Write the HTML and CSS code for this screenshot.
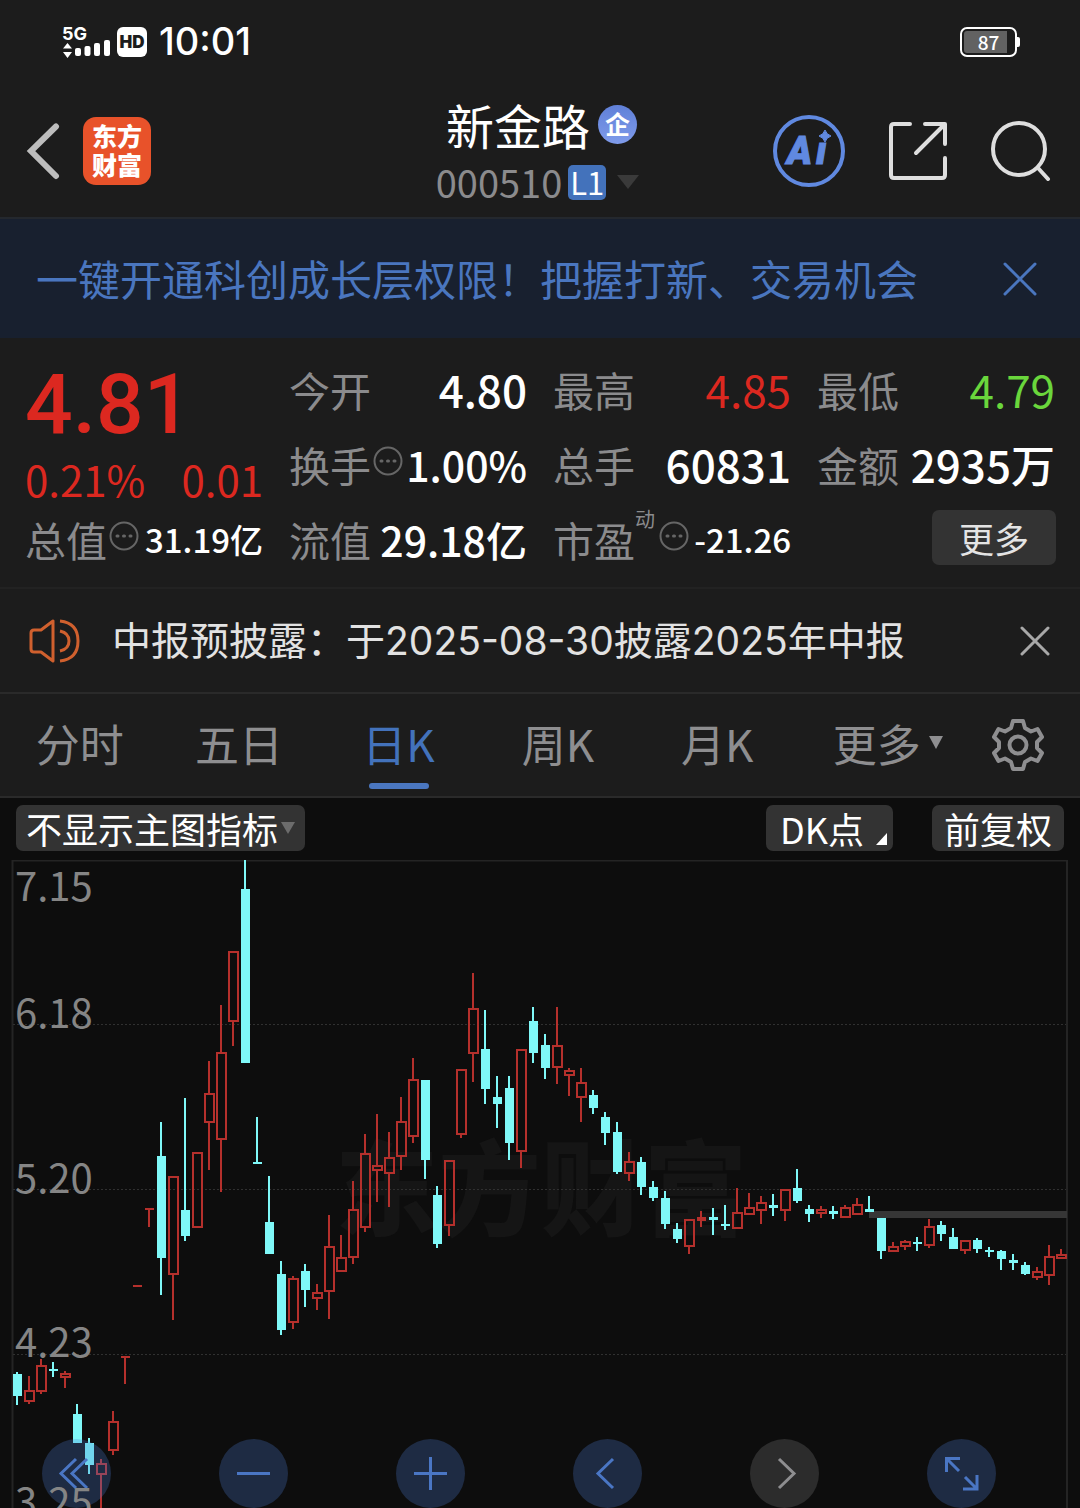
FILE: index.html
```html
<!DOCTYPE html>
<html lang="zh-CN">
<head>
<meta charset="utf-8">
<meta name="viewport" content="width=device-width, initial-scale=1">
<title>新金路 000510</title>
<link rel="stylesheet" href="styles.css">
</head>
<body>
<div class="status">
  <svg class="signal" width="48" height="36" viewBox="0 0 48 36" aria-hidden="true">
    <text x="0" y="16" class="signal-label">5G</text>
    <path d="M1 24.500L5.500 19L10 24.500ZM1 28L5.500 34L10 28Z" fill="#fff"/>
    <rect x="13" y="24" width="6" height="8" rx="2" fill="#fff"/>
    <rect x="22.500" y="22" width="6" height="10" rx="2" fill="#fff"/>
    <rect x="32" y="19" width="6" height="13" rx="2" fill="#fff"/>
    <rect x="42" y="16" width="6" height="16" rx="2" fill="#fff"/>
  </svg>
  <span class="hd">HD</span>
  <time class="clock">10:01</time>
  <span class="battery"><span class="battery-fill"></span><span class="battery-text">87</span></span>
</div>

<header class="nav">
  <div class="nav-left">
    <button class="icon-btn" aria-label="返回">
      <svg width="36" height="60" viewBox="0 0 36 60"><path d="M32 5.500L7 30L32 55" fill="none" stroke="#bdbdbd" stroke-width="6" stroke-linecap="round"/></svg>
    </button>
    <a class="logo" href="#">东方<br>财富</a>
  </div>
  <div class="nav-title">
    <h1 class="name">新金路<span class="corp">企</span></h1>
    <button class="code">000510<span class="level">L1</span>
      <svg width="22" height="14" viewBox="0 0 22 14" aria-hidden="true"><path d="M0 0H22L11 14Z" fill="#3a3a3a"/></svg>
    </button>
  </div>
  <div class="nav-right">
    <button class="icon-btn" aria-label="Ai">
      <svg width="72" height="72" viewBox="0 0 72 72">
        <circle cx="36" cy="36" r="34" fill="none" stroke="#6089e0" stroke-width="4"/>
        <text x="14" y="49" class="ai">A</text><text x="43" y="49" class="ai">ı</text>
        <path d="M52 15Q53.500 19.500 58 21Q53.500 22.500 52 27Q50.500 22.500 46 21Q50.500 19.500 52 15Z" fill="#6089e0" stroke="#6089e0"/>
      </svg>
    </button>
    <button class="icon-btn" aria-label="分享">
      <svg width="60" height="60" viewBox="0 0 60 60" fill="none" stroke="#dedede" stroke-width="4" stroke-linecap="round" stroke-linejoin="round"><path d="M22 3H6Q3 3 3 6V54Q3 57 6 57H54Q57 57 57 54V37M37 3H57V23M55 5L28 32"/></svg>
    </button>
    <button class="icon-btn" aria-label="搜索">
      <svg width="60" height="60" viewBox="0 0 60 60" fill="none" stroke="#dedede" stroke-width="4" stroke-linecap="round"><circle cx="28" cy="28" r="26"/><path d="M47 47L57 58"/></svg>
    </button>
  </div>
</header>

<div class="banner">
  <a class="banner-text" href="#">一键开通科创成长层权限！把握打新、交易机会</a>
  <button class="icon-btn" aria-label="关闭">
    <svg width="34" height="34" viewBox="0 0 34 34"><path d="M2 2L32 32M32 2L2 32" stroke="#4a76bf" stroke-width="3" stroke-linecap="round"/></svg>
  </button>
</div>

<section class="quote">
  <div class="price-box">
    <strong class="price">4.81</strong>
    <div class="change"><span>0.21%</span><span>0.01</span></div>
  </div>
  <div class="cell"><span class="label">今开</span><span class="value">4.80</span></div>
  <div class="cell"><span class="label">最高</span><span class="value up">4.85</span></div>
  <div class="cell"><span class="label">最低</span><span class="value down">4.79</span></div>
  <div class="cell"><span class="label">换手</span><svg class="dots" viewBox="0 0 30 30"><circle cx="15" cy="15" r="13.500"/><path d="M8 15h1M14.500 15h1M21 15h1"/></svg><span class="value mid">1.00%</span></div>
  <div class="cell"><span class="label">总手</span><span class="value">60831</span></div>
  <div class="cell"><span class="label">金额</span><span class="value">2935万</span></div>
  <div class="cell"><span class="label">总值</span><svg class="dots" viewBox="0 0 30 30"><circle cx="15" cy="15" r="13.500"/><path d="M8 15h1M14.500 15h1M21 15h1"/></svg><span class="value small">31.19亿</span></div>
  <div class="cell"><span class="label">流值</span><span class="value mid">29.18亿</span></div>
  <div class="cell"><span class="label">市盈</span><span class="mark">动</span><svg class="dots" viewBox="0 0 30 30"><circle cx="15" cy="15" r="13.500"/><path d="M8 15h1M14.500 15h1M21 15h1"/></svg><span class="value small">-21.26</span></div>
  <div class="cell"><button class="more">更多</button></div>
</section>

<div class="notice">
  <svg width="52" height="46" viewBox="0 0 52 46" fill="none" stroke="#d0602e" stroke-width="3" stroke-linejoin="round" aria-hidden="true">
    <path d="M24 3V43L12 34H5Q2 34 2 31V15Q2 12 5 12H12ZM31 3Q49 5 49 23Q49 41 31 43M31 13Q40 15 40 23Q40 31 31 33"/>
  </svg>
  <a class="notice-text" href="#">中报预披露：于2025-08-30披露2025年中报</a>
  <button class="icon-btn" aria-label="关闭">
    <svg width="30" height="30" viewBox="0 0 30 30"><path d="M2 2L28 28M28 2L2 28" stroke="#a8a8a8" stroke-width="3" stroke-linecap="round"/></svg>
  </button>
</div>

<nav class="tabs">
  <button class="tab">分时</button>
  <button class="tab">五日</button>
  <button class="tab active">日K</button>
  <button class="tab">周K</button>
  <button class="tab">月K</button>
  <button class="tab tab-more">更多<svg width="14" height="13" viewBox="0 0 14 13" aria-hidden="true"><path d="M0 0H14L7 13Z" fill="#8e8e90"/></svg></button>
  <button class="tab tab-set" aria-label="设置">
    <svg width="52" height="54" viewBox="0 0 52 54" fill="none" stroke="#8e8e90" stroke-width="4" stroke-linejoin="round"><path d="M21 3H31L33 10L39 13.500L45.500 11L50 19L45 24V30L50 35L45.500 43L39 40.500L33 44L31 51H21L19 44L13 40.500L6.500 43L2 35L7 30V24L2 19L6.500 11L13 13.500L19 10Z"/><circle cx="26" cy="27" r="8.500"/></svg>
  </button>
</nav>

<main class="chart">
  <div class="tools">
    <button class="chip">不显示主图指标<svg width="14" height="12" viewBox="0 0 14 12" aria-hidden="true"><path d="M0 0H14L7 12Z" fill="#6c6c6c"/></svg></button>
    <button class="chip chip-dk">DK点<svg class="corner" width="11" height="12" viewBox="0 0 11 12" aria-hidden="true"><path d="M11 0V12H0Z" fill="#fff"/></svg></button>
    <button class="chip chip-adjust">前复权</button>
  </div>
  <div class="plot">
    <svg class="canvas" viewBox="0 860 1080 648" role="img" aria-label="日K线图">
      <text x="335" y="1228" class="watermark">东方财富</text>
      <path class="frame" d="M12.500 1508V860.500H1067V1508"/>
      <path class="grid" d="M13 1024.500H1066M13 1189.500H1066M13 1354.500H1066"/>
      <rect x="869" y="1211" width="198" height="7" fill="#363636"/>
      <g id="candles"></g>
    </svg>
    <div class="controls">
      <button class="round" aria-label="最左"><svg viewBox="0 0 69 69"><path d="M34 20L19 34.500L34 49M45 20L30 34.500L45 49"/></svg></button>
      <button class="round" aria-label="缩小"><svg viewBox="0 0 69 69"><path d="M18 34.500H51"/></svg></button>
      <button class="round" aria-label="放大"><svg viewBox="0 0 69 69"><path d="M18 34.500H51M34.500 18V51"/></svg></button>
      <button class="round" aria-label="左移"><svg viewBox="0 0 69 69"><path d="M40 20L25 34.500L40 49"/></svg></button>
      <button class="round off" aria-label="右移"><svg viewBox="0 0 69 69"><path d="M29 20L44 34.500L29 49"/></svg></button>
      <button class="round" aria-label="全屏"><svg viewBox="0 0 69 69"><path d="M33 19.500H19.500V33M20 20L32 32M36 50H50V36M49 49L38 38"/></svg></button>
    </div>
    <svg class="axis" viewBox="0 860 1080 648">
      <text x="15" y="901">7.15</text>
      <text x="15" y="1028">6.18</text>
      <text x="15" y="1193">5.20</text>
      <text x="15" y="1357">4.23</text>
      <text x="15" y="1517">3.25</text>
    </svg>
  </div>
</main>
<script src="chart.js"></script>
</body>
</html>
```
FILE: styles.css
```css
* { box-sizing: border-box; }
body {
  margin: 0;
  background: #0d0d0d;
  color: #fff;
  font-family: "Noto Sans CJK SC", sans-serif;
  font-weight: 400;
  overflow-x: hidden;
}
button {
  margin: 0;
  padding: 0;
  border: 0;
  background: none;
  color: inherit;
  font: inherit;
}
a { color: inherit; text-decoration: none; }
svg { display: block; flex: none; }
.icon-btn { display: flex; }

.status {
  display: flex;
  align-items: center;
  height: 83px;
  padding: 0 60px 0 62px;
  background: #1c1c1c;
}
.signal { overflow: visible; }
.signal-label { font: 700 18px Inter, sans-serif; fill: #fff; }
.hd {
  width: 30px;
  height: 30px;
  margin-left: 7px;
  border-radius: 6px;
  background: #fff;
  color: #1c1c1c;
  font: 900 17px/30px Inter, sans-serif;
  text-align: center;
}
.clock { margin-left: 12px; font: 500 38px/83px Inter, sans-serif; }
.battery {
  position: relative;
  width: 57px;
  height: 30px;
  margin-left: auto;
  margin-right: 3px;
  padding: 2px;
  border: 2px solid #fff;
  border-radius: 7px;
}
.battery::after {
  content: "";
  position: absolute;
  right: -5px;
  top: 8px;
  width: 3px;
  height: 10px;
  border-radius: 0 2px 2px 0;
  background: #fff;
}
.battery-fill { display: block; width: 87%; height: 100%; border-radius: 3px 0 0 3px; background: #626262; }
.battery-text { position: absolute; inset: 0; font: 500 19px/26px "Noto Sans CJK SC", sans-serif; text-align: center; }

.nav {
  display: grid;
  grid-template-columns: 1fr auto 1fr;
  align-items: center;
  height: 136px;
  padding: 2px 29px 0 24px;
  border-bottom: 2px solid #24282e;
  background: #1c1c1c;
}
.nav-left { display: flex; align-items: center; gap: 23px; }
.logo {
  width: 68px;
  height: 68px;
  padding-top: 4px;
  border-radius: 13px;
  background: #e8522a;
  font-size: 25px;
  font-weight: 900;
  line-height: 29px;
  text-align: center;
}
.nav-title { display: flex; flex-direction: column; align-items: center; padding-top: 4px; }
.name { display: flex; align-items: center; gap: 8px; margin: 0; padding-left: 8px; font-size: 48px; font-weight: 400; line-height: 58px; }
.corp {
  width: 39px;
  height: 39px;
  border-radius: 50%;
  background: linear-gradient(#6080d8, #7f9bea);
  font-size: 25px;
  font-weight: 700;
  line-height: 37px;
  text-align: center;
}
.code { display: flex; align-items: center; color: #8b8b8d; font-size: 38px; line-height: 58px; }
.level {
  width: 38px;
  height: 35px;
  margin: 0 11px 0 6px;
  border-radius: 5px;
  background: #4372bb;
  color: #fff;
  font-size: 31px;
  line-height: 33px;
  text-align: center;
}
.nav-right { display: flex; align-items: center; justify-content: flex-end; gap: 43px; }
.ai { font: italic 900 38px Roboto, sans-serif; fill: #6089e0; stroke: #6089e0; }

.banner {
  display: flex;
  align-items: center;
  justify-content: space-between;
  height: 119px;
  padding: 0 43px 0 36px;
  background: #18202f;
  color: #4a76bf;
}
.banner-text { padding-bottom: 2px; font-size: 42px; line-height: 60px; white-space: nowrap; }

.quote {
  display: grid;
  grid-template-columns: repeat(4, 1fr);
  grid-auto-rows: 75px;
  column-gap: 26px;
  padding: 13px 25px 11px;
  border-bottom: 2px solid #222;
  background: #1c1c1c;
}
.price-box { grid-row: span 2; color: #dc2820; }
.price { display: block; font: 500 84px/108px Roboto, sans-serif; }
.change { display: flex; justify-content: space-between; font-size: 42px; line-height: 40px; }
.cell { display: flex; align-items: center; white-space: nowrap; line-height: 60px; }
.label { color: #8b8b8d; font-size: 41px; }
.value { margin-left: auto; font-size: 44px; font-weight: 500; }
.mid { font-size: 41px; }
.small { font-size: 33px; }
.up { color: #dc2820; font-weight: 400; }
.down { color: #6ad63c; font-weight: 400; }
.dots { width: 30px; height: 30px; margin: 0 0 6px 2px; fill: none; stroke: #666; stroke-width: 2; stroke-linecap: round; }
.dots path { stroke-width: 3; }
.mark { align-self: flex-start; padding-right: 2px; color: #8b8b8d; font-size: 20px; line-height: 36px; }
.more {
  width: 124px;
  height: 55px;
  margin: 0 -1px 2px auto;
  border-radius: 7px;
  background: #333;
  color: #e4e4e4;
  font-size: 35px;
  line-height: 52px;
}

.notice {
  display: flex;
  align-items: center;
  height: 105px;
  padding: 0 30px 0 29px;
  border-bottom: 2px solid #2a2a2a;
  background: #1c1c1c;
  color: #e2e2e2;
}
.notice-text { margin: 0 auto 0 31px; font-family: Inter, "Noto Sans CJK SC", sans-serif; font-size: 39px; line-height: 60px; white-space: nowrap; }

.tabs {
  display: grid;
  grid-template-columns: repeat(6, 4fr) 3fr;
  height: 104px;
  padding-right: 4px;
  border-bottom: 2px solid #2a2a2a;
  background: #1c1c1c;
}
.tab {
  position: relative;
  display: flex;
  align-items: center;
  justify-content: center;
  padding-bottom: 5px;
  color: #8e8e90;
  font-size: 44px;
}
.tab-more { gap: 8px; padding-left: 22px; }
.tab-set { padding: 0 0 0 4px; }
.active { color: #4372bb; }
.active::after {
  content: "";
  position: absolute;
  left: 50%;
  bottom: 7px;
  width: 60px;
  height: 6px;
  margin-left: -30px;
  border-radius: 3px;
  background: #4a76bf;
}

.tools { display: flex; align-items: center; height: 62px; padding: 0 16px 2px; }
.chip {
  display: flex;
  align-items: center;
  gap: 3px;
  height: 46px;
  padding: 0 10px;
  border-radius: 7px;
  background: #333;
  font-size: 36px;
  line-height: 43px;
}
.chip-dk { gap: 12px; margin-left: auto; padding: 0 6px 0 14px; }
.corner { align-self: flex-end; margin-bottom: 6px; }
.chip-adjust { margin-left: 39px; padding: 0 12px; }

.plot { position: relative; }
.canvas { width: 100%; height: auto; }
.watermark { font-size: 103px; font-weight: 900; fill: #151515; }
.frame { fill: none; stroke: #242424; stroke-width: 2; }
.grid { fill: none; stroke: #303030; stroke-dasharray: 2 2; }
.rise-line { fill: none; stroke: #b5302c; stroke-width: 2; }
.rise-wick { fill: #b5302c; }
.fall { fill: #7ff8f8; }
.controls {
  position: absolute;
  inset: auto 0 0;
  display: flex;
  justify-content: space-between;
  padding: 0 84px 0 42px;
}
.round { width: 69px; height: 69px; border-radius: 50%; background: rgb(74 122 208 / 28%); color: #4a76c4; }
.round svg { fill: none; stroke: currentColor; stroke-width: 3; }
.off { background: #2c2c2c; color: #8e8e90; }
.axis { position: absolute; inset: 0; width: 100%; height: 100%; overflow: visible; pointer-events: none; fill: #858585; font-size: 40px; }
```
FILE: chart.js
```js
// One entry per day: direction (r = rise, f = fall), high, body top, body bottom, low.
const days = `f 1372 1374 1396 1405|r 1376 1390 1402 1404|r 1359 1365 1392 1394|f 1362 1369 1371 1377
r 1371 1373 1378 1388|f 1404 1414 1443 1443|f 1438 1443 1465 1474|r 1459 1463 1475 1508|r 1411 1421 1451 1455
r 1356 1356 1358 1384|r 1285 1285 1287 1287|r 1208 1208 1210 1227|f 1122 1156 1258 1295|r 1176 1176 1275 1320
f 1098 1210 1236 1241|r 1152 1152 1228 1228|r 1061 1093 1123 1170|r 1005 1052 1140 1192|r 951 951 1022 1046
f 860 889 1063 1063|f 1117 1162 1164 1164|f 1176 1222 1254 1254|f 1261 1274 1330 1335|r 1276 1278 1323 1329
f 1264 1271 1290 1307|r 1284 1292 1299 1310|r 1215 1246 1292 1319|r 1235 1257 1272 1272|r 1181 1209 1258 1264
r 1134 1153 1228 1232|r 1114 1165 1171 1202|r 1132 1157 1174 1207|r 1097 1121 1157 1170|r 1058 1079 1137 1143
f 1080 1080 1160 1179|f 1186 1195 1244 1248|r 1160 1160 1226 1236|r 1069 1069 1135 1138|r 973 1008 1054 1082
f 1010 1049 1089 1104|f 1076 1097 1104 1128|f 1076 1088 1143 1160|r 1049 1049 1152 1168|f 1007 1021 1053 1063
f 1034 1045 1068 1079|r 1007 1045 1068 1084|r 1068 1070 1076 1096|r 1068 1082 1098 1122|f 1090 1095 1108 1114
f 1112 1117 1133 1145|f 1122 1132 1172 1174|r 1152 1161 1174 1181|f 1157 1162 1187 1195|f 1181 1187 1198 1201
f 1191 1198 1224 1229|f 1223 1229 1239 1243|r 1219 1219 1247 1254|r 1211 1217 1221 1227|f 1208 1217 1220 1235
f 1205 1224 1226 1230|r 1188 1212 1229 1229|r 1193 1207 1215 1215|r 1196 1202 1211 1224|f 1194 1205 1208 1216
r 1189 1189 1211 1221|f 1169 1188 1201 1203|f 1205 1209 1214 1222|r 1206 1209 1214 1218|f 1206 1211 1214 1219
r 1205 1207 1218 1218|r 1198 1204 1215 1215|f 1196 1209 1212 1212|f 1218 1218 1251 1259|r 1242 1246 1252 1252
r 1240 1241 1247 1250|f 1237 1242 1244 1251|r 1219 1226 1246 1248|f 1221 1225 1234 1241|f 1228 1237 1249 1249
r 1240 1240 1251 1254|f 1238 1240 1249 1253|f 1247 1250 1252 1257|f 1250 1251 1259 1270|f 1254 1260 1263 1270
f 1262 1265 1274 1275|r 1267 1271 1278 1280|r 1245 1256 1276 1285|r 1249 1254 1259 1259`.split(/[|\n]/);

const STEP = 12;
const FIRST_X = 17;
const group = document.getElementById("candles");

function rect(x, y, width, height, className) {
  const node = document.createElementNS("http://www.w3.org/2000/svg", "rect");
  Object.entries({ x, y, width, height, class: className }).forEach(([k, v]) => node.setAttribute(k, v));
  group.appendChild(node);
}

days.forEach((row, i) => {
  const [kind, ...prices] = row.trim().split(" ");
  const [high, top, bottom, low] = prices.map(Number);
  const x = FIRST_X + i * STEP;
  const wick = kind === "r" ? "rise-wick" : "fall";
  if (top > high) rect(x - 1, high, 2, top - high, wick);
  if (low > bottom) rect(x - 1, bottom, 2, low - bottom, wick);
  if (kind === "f") rect(x - 4, top, 9, bottom - top, "fall");
  else if (bottom - top < 5) rect(x - 4, top, 9, bottom - top, "rise-wick");
  else rect(x - 4, top + 1, 9, bottom - top - 2, "rise-line");
});
```
